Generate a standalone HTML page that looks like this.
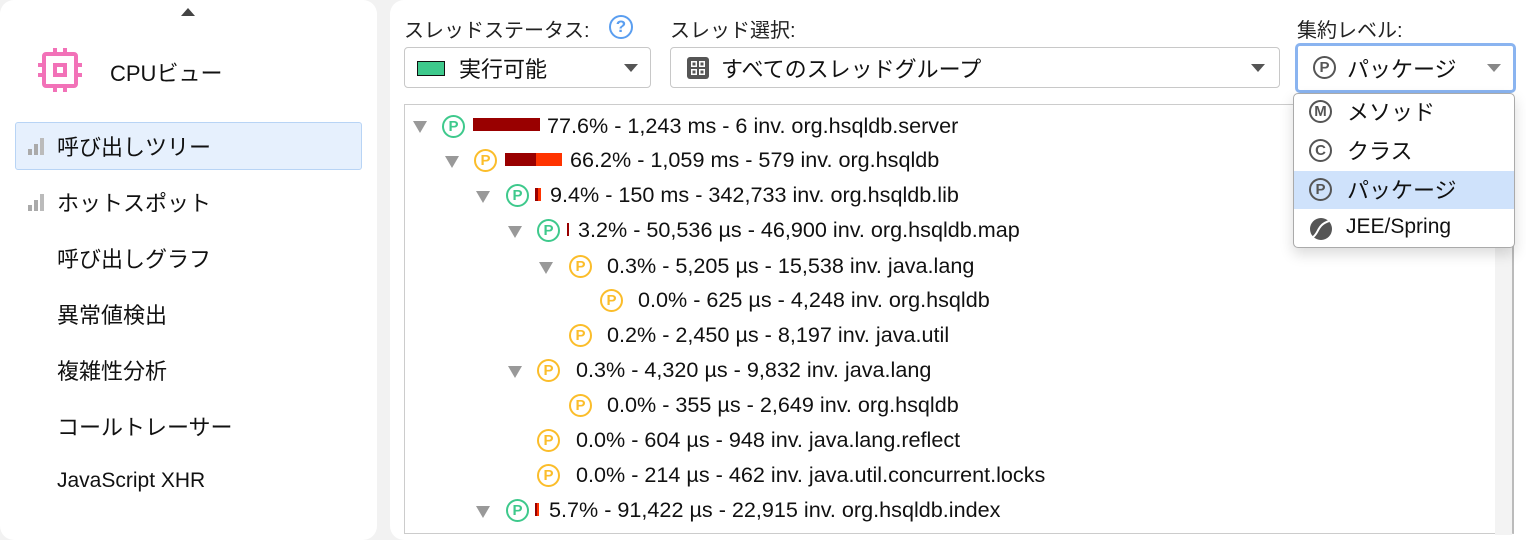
<!DOCTYPE html>
<html><head><meta charset="utf-8"><style>
*{margin:0;padding:0;box-sizing:border-box}
body{width:1526px;height:525px;background:#f2f2f2;font-family:"Liberation Sans","Noto Sans CJK JP",sans-serif;color:#111;position:relative;overflow:hidden}
.a{position:absolute;white-space:nowrap}
#left{position:absolute;left:0;top:0;width:377px;height:540px;background:#fff;border-radius:14px}
#right{position:absolute;left:390px;top:0;width:1150px;height:540px;background:#fff;border-radius:14px}
.nav{font-size:22px;left:57px}
.sig{position:absolute;left:28px}
.sig i{position:absolute;bottom:0;width:4px;background:#aaa}
.lbl{font-size:20px;color:#222}
.sel{position:absolute;border:1px solid #c8c8c8;border-radius:4px;height:41px;background:#fff}
.caret{position:absolute;width:0;height:0;border-left:7px solid transparent;border-right:7px solid transparent;border-top:8px solid #555}
.row{font-size:21.6px;position:absolute;white-space:nowrap;line-height:24px}
.tri{position:absolute;width:0;height:0;border-left:7px solid transparent;border-right:7px solid transparent;border-top:12px solid #999}
.ic{position:absolute;width:23px;height:23px;border-radius:50%;border:2px solid;font-size:15px;font-weight:bold;text-align:center;line-height:19px;font-family:"Liberation Sans",sans-serif}
.g{border-color:#3ec98c;color:#3ec98c}
.o{border-color:#fbbd2a;color:#fbbd2a}
.m{border-color:#555;color:#555}
.dd{font-size:22px}
</style></head><body>
<div id="left"></div>
<div id="right"></div>
<div class="caret" style="left:181px;top:8px;border-top:none;border-bottom:8px solid #444"></div>
<svg class="a" style="left:36px;top:46px" width="48" height="48" viewBox="0 0 48 48"><g fill="none" stroke="#f272b8" stroke-width="4"><rect x="8" y="8" width="32" height="32" rx="2"/><rect x="19" y="19" width="10" height="10"/></g><g stroke="#f272b8" stroke-width="4"><line x1="19" y1="2" x2="19" y2="8"/><line x1="29" y1="2" x2="29" y2="8"/><line x1="19" y1="40" x2="19" y2="46"/><line x1="29" y1="40" x2="29" y2="46"/><line x1="2" y1="19" x2="8" y2="19"/><line x1="2" y1="29" x2="8" y2="29"/><line x1="40" y1="19" x2="46" y2="19"/><line x1="40" y1="29" x2="46" y2="29"/></g></svg>
<div class="a" style="left:110px;top:56px;font-size:22px">CPUビュー</div>
<div class="a" style="left:15px;top:122px;width:347px;height:48px;background:#e6f0fd;border:1px solid #b8d4f5;border-radius:3px"></div>
<div class="sig" style="top:138px;width:20px;height:17px"><i style="left:0;height:6px"></i><i style="left:6px;height:11px"></i><i style="left:12px;height:17px;background:#bbb"></i></div>
<div class="a nav" style="top:130px">呼び出しツリー</div>
<div class="sig" style="top:194px;width:20px;height:17px"><i style="left:0;height:6px"></i><i style="left:6px;height:11px"></i><i style="left:12px;height:17px;background:#bbb"></i></div>
<div class="a nav" style="top:186px">ホットスポット</div>
<div class="a nav" style="top:242px">呼び出しグラフ</div>
<div class="a nav" style="top:298px">異常値検出</div>
<div class="a nav" style="top:354px">複雑性分析</div>
<div class="a nav" style="top:410px">コールトレーサー</div>
<div class="a nav" style="top:469px;font-size:21px">JavaScript XHR</div>

<div class="a lbl" style="left:404px;top:14px">スレッドステータス:</div>
<div class="a" style="left:609px;top:15px;width:24px;height:24px;border:2px solid #5a9ef0;border-radius:50%;color:#5a9ef0;font-size:17px;font-weight:bold;text-align:center;line-height:20px">?</div>
<div class="a lbl" style="left:670px;top:14px">スレッド選択:</div>
<div class="a lbl" style="left:1297px;top:14px">集約レベル:</div>

<div class="sel" style="left:404px;top:47px;width:247px"></div>
<div class="a" style="left:417px;top:61px;width:28px;height:15px;background:#3ec98c;border:1px solid #111"></div>
<div class="a" style="left:459px;top:52px;font-size:22px">実行可能</div>
<div class="caret" style="left:624px;top:64px"></div>
<div class="sel" style="left:670px;top:47px;width:610px"></div>
<svg class="a" style="left:686px;top:56px" width="24" height="24" viewBox="0 0 24 24"><rect x="1" y="1" width="22" height="22" rx="3" fill="#555"/><g fill="#fff"><rect x="5" y="5" width="6" height="6"/><rect x="13" y="5" width="6" height="6"/><rect x="5" y="13" width="6" height="6"/><rect x="13" y="13" width="6" height="6"/></g><g fill="#555"><rect x="6.5" y="6.5" width="3" height="3"/><rect x="14.5" y="6.5" width="3" height="3"/><rect x="6.5" y="14.5" width="3" height="3"/><rect x="14.5" y="14.5" width="3" height="3"/></g></svg>
<div class="a" style="left:721px;top:52px;font-size:22px">すべてのスレッドグループ</div>
<div class="caret" style="left:1251px;top:64px"></div>
<div class="a" style="left:1295px;top:43px;width:221px;height:50px;border:3px solid #8ab4f0;border-radius:5px;background:#fff"></div>
<div class="ic m" style="left:1313px;top:56px">P</div>
<div class="a" style="left:1347px;top:52px;font-size:22px">パッケージ</div>
<div class="caret" style="left:1487px;top:64px;border-top-color:#888"></div>

<div class="a" style="left:404px;top:104px;width:1110px;height:430px;border:1px solid #ccc;border-right:2px solid #bbb"></div>
<div class="a" style="left:1495px;top:105px;width:17px;height:430px;background:#f3f3f3"></div>

<div class="tri" style="left:413px;top:121px"></div><div class="ic g" style="left:442px;top:115px">P</div><div class="a" style="left:473px;top:118px;width:67px;height:13px;background:#990000"></div><div class="row" style="left:547px;top:114px">77.6% - 1,243 ms - 6 inv. org.hsqldb.server</div>
<div class="tri" style="left:445px;top:156px"></div><div class="ic o" style="left:474px;top:149px">P</div><div class="a" style="left:505px;top:153px;width:31px;height:13px;background:#990000"></div><div class="a" style="left:536px;top:153px;width:26px;height:13px;background:#ff3300"></div><div class="row" style="left:570px;top:148px">66.2% - 1,059 ms - 579 inv. org.hsqldb</div>
<div class="tri" style="left:476px;top:191px"></div><div class="ic g" style="left:506px;top:184px">P</div><div class="a" style="left:535px;top:188px;width:3px;height:13px;background:#990000"></div><div class="a" style="left:538px;top:188px;width:3px;height:13px;background:#ff3300"></div><div class="row" style="left:550px;top:183px">9.4% - 150 ms - 342,733 inv. org.hsqldb.lib</div>
<div class="tri" style="left:508px;top:226px"></div><div class="ic g" style="left:537px;top:219px">P</div><div class="a" style="left:567px;top:223px;width:2px;height:13px;background:#990000"></div><div class="row" style="left:578px;top:218px">3.2% - 50,536 µs - 46,900 inv. org.hsqldb.map</div>
<div class="tri" style="left:539px;top:262px"></div><div class="ic o" style="left:569px;top:255px">P</div><div class="row" style="left:607px;top:254px">0.3% - 5,205 µs - 15,538 inv. java.lang</div>
<div class="ic o" style="left:600px;top:289px">P</div><div class="row" style="left:638px;top:288px">0.0% - 625 µs - 4,248 inv. org.hsqldb</div>
<div class="ic o" style="left:569px;top:324px">P</div><div class="row" style="left:607px;top:323px">0.2% - 2,450 µs - 8,197 inv. java.util</div>
<div class="tri" style="left:508px;top:366px"></div><div class="ic o" style="left:537px;top:359px">P</div><div class="row" style="left:576px;top:358px">0.3% - 4,320 µs - 9,832 inv. java.lang</div>
<div class="ic o" style="left:569px;top:394px">P</div><div class="row" style="left:607px;top:393px">0.0% - 355 µs - 2,649 inv. org.hsqldb</div>
<div class="ic o" style="left:537px;top:429px">P</div><div class="row" style="left:576px;top:428px">0.0% - 604 µs - 948 inv. java.lang.reflect</div>
<div class="ic o" style="left:537px;top:464px">P</div><div class="row" style="left:576px;top:463px">0.0% - 214 µs - 462 inv. java.util.concurrent.locks</div>
<div class="tri" style="left:476px;top:506px"></div><div class="ic g" style="left:506px;top:499px">P</div><div class="a" style="left:535px;top:503px;width:2px;height:13px;background:#990000"></div><div class="a" style="left:537px;top:503px;width:2px;height:13px;background:#ff3300"></div><div class="row" style="left:549px;top:498px">5.7% - 91,422 µs - 22,915 inv. org.hsqldb.index</div>

<div class="a" style="left:1293px;top:93px;width:222px;height:155px;background:#fff;border:1px solid #aaa;border-radius:5px;box-shadow:0 6px 14px rgba(0,0,0,.15)"></div>
<div class="a" style="left:1294px;top:171px;width:220px;height:38px;background:#cfe2fb"></div>
<div class="ic m" style="left:1309px;top:100px">M</div><div class="a dd" style="left:1347px;top:95px">メソッド</div>
<div class="ic m" style="left:1309px;top:139px">C</div><div class="a dd" style="left:1347px;top:134px">クラス</div>
<div class="ic m" style="left:1309px;top:178px">P</div><div class="a dd" style="left:1347px;top:173px">パッケージ</div>
<svg class="a" style="left:1309px;top:217px" width="24" height="24" viewBox="0 0 24 24"><circle cx="12" cy="12" r="11" fill="#555"/><path d="M4 20 C10 16 8 8 20 4" stroke="#fff" stroke-width="2" fill="none"/></svg>
<div class="a" style="left:1346px;top:215px;font-size:21px">JEE/Spring</div>
</body></html>
